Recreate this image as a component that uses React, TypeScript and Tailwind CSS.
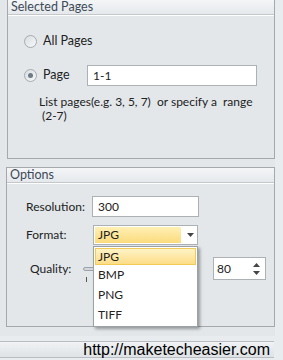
import React from "react";

const font = { fontFamily: 'Lato, "Noto Sans", sans-serif' };

function Radio({ checked }: { checked?: boolean }) {
  return (
    <span className="flex h-[13px] w-[13px] items-center justify-center rounded-full border border-[#a6abb0] bg-gradient-to-br from-[#d9dde1] to-[#f7f8f9]">
      {checked && <span className="h-[5px] w-[5px] rounded-full bg-[#6e7a86]" />}
    </span>
  );
}

function Header({ title }: { title: string }) {
  return (
    <div className="flex h-[15px] items-center border-b border-[#c3c8cd] bg-gradient-to-b from-[#f3f5f7] to-[#e6e9ec] pl-[3px] pt-[1px] text-[12.5px] leading-none text-[#3d4a57] shadow-[0_1px_0_#ffffff]">
      {title}
    </div>
  );
}

export default function App() {
  return (
    <div className="relative h-[360px] w-[283px] overflow-hidden bg-[#e9ecef] text-[12px] text-[#222]" style={font}>
      <div className="w-[275px] bg-[#e3e7ea] pb-[9px]">
        {/* Selected Pages panel */}
        <div className="ml-[7px] h-[159px] w-[268px] border border-t-0 border-[#a4a9ad]">
          <Header title="Selected Pages" />
          <div className="pl-[16px] pt-[18px]">
            <div className="flex h-[16px] items-center gap-[6px]">
              <Radio />
              <span className="text-[12.5px]">All Pages</span>
            </div>
            <div className="mt-[16px] flex h-[21px] items-center">
              <Radio checked />
              <span className="ml-[6px] w-[44px] text-[12.5px]">Page</span>
              <div className="flex h-[21px] w-[170px] items-center border border-[#acb1b5] bg-white pl-[5px]">1-1</div>
            </div>
            <div className="mt-[9px] pl-[15px] leading-[14px]">
              <div>List pages(e.g. 3, 5, 7)&nbsp; or specify a&nbsp; range</div>
              <div className="pl-[3px]">(2-7)</div>
            </div>
          </div>
        </div>
        {/* Options panel */}
        <div className="ml-[6px] mt-[8px] h-[160px] w-[269px] border border-[#a4a9ad]">
          <Header title="Options" />
          <div className="relative pl-[19px] pt-[13px]">
            <div className="flex h-[21px] items-center">
              <span className="w-[66px]">Resolution:</span>
              <div className="flex h-[21px] w-[107px] items-center border border-[#acb1b5] bg-white pl-[5px]">300</div>
            </div>
            <div className="mt-[8px] flex h-[20px] items-center">
              <span className="w-[67px]">Format:</span>
              <div className="flex h-[20px] w-[105px] items-center border border-[#acb1b5] bg-white p-[1px]">
                <div className="flex h-full w-[86px] items-center bg-gradient-to-b from-[#fff0b4] to-[#fbdb7c] pl-[3px]">JPG</div>
                <svg width="7" height="4" viewBox="0 0 7 4" className="ml-[6px]">
                  <path d="M0 0h7L3.5 4z" fill="#444" />
                </svg>
              </div>
            </div>
            <div className="mt-[12px] flex h-[23px] items-center">
              <span className="ml-[4px] w-[53px]">Quality:</span>
              <div className="relative h-[23px] w-[130px]">
                <div className="absolute left-0 top-[10px] h-[4px] w-[12px] rounded-sm border border-[#9ea3a8] bg-[#d3d7db]" />
                <div className="absolute left-[3px] top-[20px] h-[5px] w-px bg-[#555]" />
              </div>
              <div className="flex h-[23px] w-[53px] items-center justify-between border border-[#acb1b5] bg-white pl-[3px] pr-[5px]">
                <span>80</span>
                <svg width="7" height="14" viewBox="0 0 7 14">
                  <path d="M3.5 1L7 5H0z" fill="#444" />
                  <path d="M0 9h7L3.5 13z" fill="#444" />
                </svg>
              </div>
            </div>
            {/* dropdown */}
            <div className="absolute left-[86px] top-[63px] w-[105px] border border-[#9ca1a6] bg-white p-[1px] shadow-[2px_2px_3px_rgba(0,0,0,0.35)]">
              <div className="flex h-[17px] items-center border border-[#f2ca58] bg-gradient-to-b from-[#fff3c6] to-[#fcdd86] pl-[2px]">JPG</div>
              <div className="flex h-[20px] items-center pl-[3px]">BMP</div>
              <div className="flex h-[20px] items-center pl-[3px]">PNG</div>
              <div className="flex h-[20px] items-center pl-[3px]">TIFF</div>
            </div>
          </div>
        </div>
      </div>
      {/* bottom bar */}
      <div className="mt-[5px] flex h-[17px] w-[274px] items-center justify-end border-y border-[#b9bdc1] bg-gradient-to-b from-[#f0f2f4] to-[#dfe3e6] pr-[4px]">
        <span className="text-[16px] leading-none text-black" style={{ fontFamily: '"Liberation Sans", Arial, sans-serif' }}>
          http://maketecheasier.com
        </span>
      </div>
    </div>
  );
}
